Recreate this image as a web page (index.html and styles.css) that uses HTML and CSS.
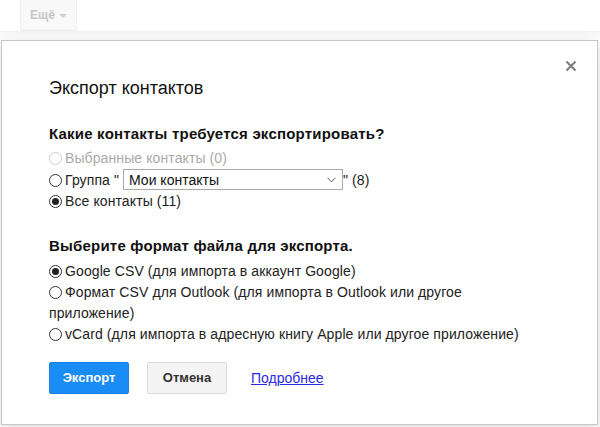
FILE: index.html
```html
<!DOCTYPE html>
<html lang="ru">
<head>
  <meta charset="UTF-8" />
  <title>Экспорт контактов</title>
  <link rel="stylesheet" href="styles.css">
</head>
<body>
  <div class="toolbar">
    <div class="more-button">Ещё <span class="caret"></span></div>
  </div>

  <div class="dialog">
    <svg class="close" width="12" height="12" viewBox="0 0 12 12">
      <path d="M1.5 1.5 L10.5 10.5 M10.5 1.5 L1.5 10.5" stroke="#808080" stroke-width="2.2"/>
    </svg>

    <div class="dialog-title">Экспорт контактов</div>

    <div class="section">
      <div class="section-title">Какие контакты требуется экспортировать?</div>
      <label class="option disabled"><input type="radio" name="which" disabled>Выбранные контакты (0)</label>
      <label class="option"><input type="radio" name="which">Группа "
        <span class="select-wrap">
          <select class="group-select"><option>Мои контакты</option></select>
          <svg class="chevron" width="9" height="6" viewBox="0 0 9 6"><path d="M0.5 0.8 L4.5 4.8 L8.5 0.8" fill="none" stroke="#555" stroke-width="1"/></svg>
        </span>" (8)</label>
      <label class="option"><input type="radio" name="which" checked>Все контакты (11)</label>
    </div>

    <div class="section">
      <div class="section-title">Выберите формат файла для экспорта.</div>
      <label class="option"><input type="radio" name="format" checked>Google CSV (для импорта в аккаунт Google)</label>
      <label class="option"><input type="radio" name="format">Формат CSV для Outlook (для импорта в Outlook или другое приложение)</label>
      <label class="option"><input type="radio" name="format">vCard (для импорта в адресную книгу Apple или другое приложение)</label>
    </div>

    <div class="actions">
      <button class="btn btn-primary">Экспорт</button>
      <button class="btn btn-default">Отмена</button>
      <a href="#" class="more-link">Подробнее</a>
    </div>
  </div>
</body>
</html>
```

FILE: styles.css
```css
body {
  margin: 0;
  font-family: "Liberation Sans", Arial, sans-serif;
  background: #fff;
  color: #222;
  height: 427px;
  overflow: hidden;
}

.toolbar {
  height: 31px;
  padding-left: 20px;
  border-bottom: 1px solid #f4f4f4;
  box-shadow: 0 3px 6px rgba(0, 0, 0, 0.04);
}

.more-button {
  width: 57px;
  height: 31px;
  box-sizing: border-box;
  background: #f9f9f9;
  border: 1px solid #f0f0f0;
  border-top: none;
  border-radius: 0 0 2px 2px;
  color: #c6c6c6;
  font-size: 12px;
  font-weight: bold;
  display: flex;
  align-items: center;
  justify-content: center;
  gap: 4px;
}

.caret {
  border-left: 4px solid transparent;
  border-right: 4px solid transparent;
  border-top: 4px solid #d0d0d0;
  margin-top: 1px;
}

.dialog {
  position: relative;
  margin: 8px 0 0 1px;
  width: 597px;
  height: 385px;
  box-sizing: border-box;
  border: 1px solid #c6c6c6;
  background: #fff;
  box-shadow: 0 4px 16px rgba(0, 0, 0, 0.15);
  padding: 37px 62px 0 47px;
}

.close {
  position: absolute;
  top: 19px;
  right: 20px;
}

.dialog-title {
  font-size: 18px;
  color: #111;
  line-height: 20px;
}

.section {
  margin-top: 28px;
  font-size: 14px;
  letter-spacing: 0.1px;
}

.section + .section {
  margin-top: 26px;
}

.section-title {
  font-size: 15px;
  font-weight: bold;
  color: #111;
  margin-bottom: 6px;
  line-height: 16px;
  letter-spacing: 0.2px;
}

.section + .section .section-title {
  margin-bottom: 7px;
}

.option {
  display: block;
  line-height: 21px;
  color: #222;
}

.option.disabled {
  color: #aaa;
}

.option input {
  appearance: none;
  width: 13px;
  height: 13px;
  margin: 0 3px 0 0;
  border: 1px solid #333;
  border-radius: 50%;
  vertical-align: -2px;
  background: #fff;
  box-sizing: border-box;
  position: relative;
}

.option input:checked::after {
  content: "";
  position: absolute;
  left: 2px;
  top: 2px;
  width: 7px;
  height: 7px;
  border-radius: 50%;
  background: #222;
}

.option input:disabled {
  border-color: #ccc;
}

.select-wrap {
  position: relative;
  display: inline-block;
  vertical-align: 0;
}

.group-select {
  appearance: none;
  width: 220px;
  height: 21px;
  border: 1px solid #a9a9a9;
  border-radius: 0;
  background: #fff;
  font-family: inherit;
  font-size: 14px;
  color: #111;
  padding: 0 0 0 5px;
  margin: 0;
}

.chevron {
  position: absolute;
  right: 7px;
  top: 8px;
}

.actions {
  display: flex;
  align-items: center;
  gap: 18px;
  margin-top: 17px;
}

.btn {
  width: 80px;
  height: 32px;
  border-radius: 2px;
  font-family: inherit;
  font-size: 13px;
  font-weight: bold;
  cursor: pointer;
}

.btn-primary {
  background: #1a8cf6;
  border: 1px solid #1780e6;
  color: #fff;
}

.btn-default {
  background: #f4f4f4;
  border: 1px solid #dcdcdc;
  color: #333;
}

.more-link {
  margin-left: 6px;
  color: #2a2ae0;
  font-size: 14px;
}
```
